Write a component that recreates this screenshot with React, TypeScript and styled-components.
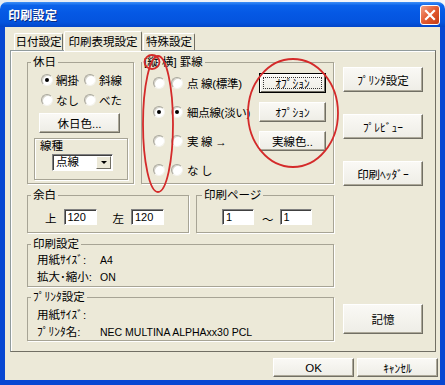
import React from "react";
import styled, { createGlobalStyle } from "styled-components";

const FONT = `"Liberation Sans", "Noto Sans CJK JP", "Noto Sans", sans-serif`;

const Global = createGlobalStyle`
  html, body { margin: 0; padding: 0; background: #eef1f6; }
  body { font-family: ${FONT}; font-size: 11.5px; color: #000; }
  * { box-sizing: border-box; }
`;

const Screen = styled.div`
  position: relative;
  width: 445px;
  height: 385px;
  overflow: hidden;
  padding-top: 2px;
  background: linear-gradient(90deg, #e6ebf2, #f6f7fa);
`;

const Window = styled.div`
  display: flex;
  flex-direction: column;
  width: 445px;
  height: 383px;
`;

const TitleBar = styled.div`
  height: 25px;
  flex: none;
  display: flex;
  align-items: center;
  justify-content: space-between;
  padding: 0 5px 0 8px;
  border-radius: 7px 7px 0 0;
  background: linear-gradient(#3d8ff6 0%, #0a62ea 14%, #0558e4 45%, #0454de 80%, #0346c9 100%);
`;

const Title = styled.span`
  color: #fff;
  font-weight: bold;
  font-size: 12px;
  letter-spacing: 0.3px;
  text-shadow: 1px 1px 0 #0a2a80;
`;

const CloseButton = styled.div`
  width: 20px;
  height: 20px;
  border: 1px solid #fff;
  border-radius: 3px;
  background: linear-gradient(135deg, #f3a084, #e35a2f 50%, #c53b14);
  display: flex;
  align-items: center;
  justify-content: center;
`;

const Body = styled.div`
  flex: 1;
  display: flex;
  flex-direction: column;
  background: #ece9d8;
  border: solid #0747d2;
  border-width: 0 5px 5px 5px;
  padding: 4px 4px 3px 5px;
`;

const TabRow = styled.div`
  display: flex;
  align-items: flex-end;
  height: 19px;
  padding-left: 4px;
  gap: 1px;
  position: relative;
  z-index: 1;
`;

const Tab = styled.div<{ $active?: boolean; $w: number }>`
  width: ${(p) => p.$w}px;
  height: ${(p) => (p.$active ? 20 : 17)}px;
  margin-bottom: ${(p) => (p.$active ? -1 : 0)}px;
  display: flex;
  align-items: center;
  justify-content: center;
  background: #ece9d8;
  border-top: 1px solid #fff;
  border-left: 1px solid #fff;
  border-right: 1px solid #716f64;
  border-radius: 2px 2px 0 0;
  white-space: nowrap;
  line-height: 14px;
`;

const Panel = styled.div`
  height: 302px;
  border: 1px solid #919b9c;
  border-right-color: #716f64;
  border-bottom-color: #716f64;
  box-shadow: inset 1px 1px 0 #fff;
  background: #ece9d8;
  padding: 5px 0 0 16px;
  display: grid;
  grid-template-columns: 307px 80px;
  column-gap: 9px;
  align-items: start;
`;

const LeftColumn = styled.div`
  display: flex;
  flex-direction: column;
`;

const Row = styled.div<{ $mt?: number }>`
  display: flex;
  gap: 7px;
  margin-top: ${(p) => p.$mt ?? 0}px;
`;

const Group = styled.fieldset<{ $w: number; $h: number; $mt?: number }>`
  margin: ${(p) => p.$mt ?? 0}px 0 0 0;
  padding: 0;
  min-width: 0;
  width: ${(p) => p.$w}px;
  height: ${(p) => p.$h}px;
  border: 1px solid #a7a495;
  box-shadow: 1px 1px 0 #fff;
`;

const Legend = styled.legend<{ $x?: number }>`
  padding: 0 2px;
  margin-left: ${(p) => p.$x ?? 3}px;
  line-height: 12px;
  height: 12px;
  white-space: nowrap;
`;

const RadioCircle = styled.span<{ $on?: boolean }>`
  width: 12px;
  height: 12px;
  flex: none;
  border-radius: 50%;
  background: #fff;
  border: 1px solid;
  border-color: #a9a79c #f4f3ee #f4f3ee #a9a79c;
  box-shadow: inset 1px 1px 0 #d6d4ca;
  display: flex;
  align-items: center;
  justify-content: center;
  &::after {
    content: "";
    width: 4px;
    height: 4px;
    border-radius: 50%;
    background: ${(p) => (p.$on ? "#000" : "transparent")};
  }
`;

const Option = styled.label`
  display: flex;
  align-items: center;
  gap: 3px;
  height: 16px;
  white-space: nowrap;
`;

const Btn = styled.div<{ $w: number; $h: number; $focus?: boolean }>`
  position: relative;
  flex: none;
  width: ${(p) => p.$w}px;
  height: ${(p) => p.$h}px;
  display: flex;
  align-items: center;
  justify-content: center;
  white-space: nowrap;
  background: linear-gradient(#faf9f5, #eeede6);
  border: 1px solid;
  border-color: ${(p) => (p.$focus ? "#000" : "#fff #716f64 #716f64 #fff")};
  box-shadow: ${(p) =>
    p.$focus ? "inset 1px 1px 0 #fff, inset -1px -1px 0 #716f64" : "inset -1px -1px 0 #aca899"};
  &::before {
    content: "";
    display: ${(p) => (p.$focus ? "block" : "none")};
    position: absolute;
    inset: 3px;
    border: 1px dotted #333;
  }
`;

const HolidayBody = styled.div`
  display: flex;
  flex-direction: column;
  align-items: flex-start;
  padding: 4px 0 0 6px;
`;

const RadioGrid = styled.div`
  display: grid;
  grid-template-columns: 43px 43px;
  row-gap: 4px;
  margin-left: 7px;
`;

const HolidayColorButton = styled(Btn)`
  margin: 5px 0 0 5px;
`;

const LineBox = styled.div`
  margin-top: 5px;
  width: 94px;
  height: 42px;
  border: 1px solid #a7a495;
  box-shadow: 1px 1px 0 #fff, inset 1px 1px 0 #fff;
  padding: 1px 0 0 5px;
  display: flex;
  flex-direction: column;
  align-items: flex-start;
`;

const LineLabel = styled.span`
  line-height: 13px;
`;

const Select = styled.div`
  margin: 1px 0 0 12px;
  width: 61px;
  height: 17px;
  display: flex;
  background: #fff;
  border: 1px solid;
  border-color: #808080 #fff #fff #808080;
  box-shadow: inset 1px 1px 0 #404040;
  padding: 1px 1px 1px 3px;
`;

const SelectText = styled.span`
  flex: 1;
  line-height: 13px;
`;

const SelectArrow = styled.div`
  width: 15px;
  height: 100%;
  background: #ece9d8;
  border: 1px solid;
  border-color: #fff #716f64 #716f64 #fff;
  display: flex;
  align-items: center;
  justify-content: center;
  &::after {
    content: "";
    border-left: 3px solid transparent;
    border-right: 3px solid transparent;
    border-top: 3px solid #000;
  }
`;

const RuledGrid = styled.div`
  display: grid;
  grid-template-columns: 18px 16px 1fr 67px;
  grid-auto-rows: 20px;
  row-gap: 9px;
  align-items: center;
  padding: 5px 7px 0 11px;
`;

const RuledLabel = styled.span`
  white-space: nowrap;
  letter-spacing: -0.3px;
`;

const RightColumn = styled.div`
  display: flex;
  flex-direction: column;
  gap: 22px;
  padding-top: 11px;
`;

const MemoryButton = styled(Btn)`
  margin-top: 96px;
`;

const FieldRow = styled.div<{ $pl: number }>`
  display: flex;
  align-items: center;
  padding: 6px 0 0 ${(p) => p.$pl}px;
`;

const FieldLabel = styled.span<{ $ml?: number }>`
  margin: 3px 7px 0 ${(p) => p.$ml ?? 0}px;
`;

const TextBox = styled.div<{ $w: number }>`
  width: ${(p) => p.$w}px;
  height: 16px;
  background: #fff;
  border: 1px solid;
  border-color: #808080 #fff #fff #808080;
  box-shadow: inset 1px 1px 0 #404040;
  padding-left: 3px;
  font-size: 11px;
  line-height: 14px;
`;

const Tilde = styled.span`
  margin: 4px 6px 0 8px;
`;

const InfoGrid = styled.div<{ $pt: number; $gap: number }>`
  display: grid;
  grid-template-columns: 63px auto;
  row-gap: ${(p) => p.$gap}px;
  padding: ${(p) => p.$pt}px 0 0 9px;
  line-height: 16px;
  white-space: nowrap;
`;

const Value = styled.span`
  font-size: 10.5px;
`;

const Footer = styled.div`
  display: flex;
  justify-content: flex-end;
  gap: 3px;
  margin: 6px -2px 0 0;
`;

const Annotations = styled.svg`
  position: absolute;
  left: 0;
  top: 0;
  pointer-events: none;
`;

const Radio = ({ on }: { on?: boolean }) => <RadioCircle $on={on} />;

const ruledOptions = [
  { label: "点 線(標準)", on: false, btn: "ｵﾌﾟｼｮﾝ", focus: true },
  { label: "細点線(淡い)", on: true, btn: "ｵﾌﾟｼｮﾝ" },
  { label: "実 線 →", on: false, btn: "実線色.." },
  { label: "な し", on: false },
];

export default function App() {
  return (
    <>
      <Global />
      <Screen>
        <Window>
          <TitleBar>
            <Title>印刷設定</Title>
            <CloseButton>
              <svg width="12" height="12" viewBox="0 0 12 12">
                <path d="M2 2 L10 10 M10 2 L2 10" stroke="#fff" strokeWidth="2.2" strokeLinecap="square" />
              </svg>
            </CloseButton>
          </TitleBar>
          <Body>
            <TabRow>
              <Tab $w={49}>日付設定</Tab>
              <Tab $w={78} $active>印刷表現設定</Tab>
              <Tab $w={52}>特殊設定</Tab>
            </TabRow>
            <Panel>
              <LeftColumn>
                <Row>
                  <Group $w={107} $h={128}>
                    <Legend>休日</Legend>
                    <HolidayBody>
                      <RadioGrid>
                        <Option><Radio on />網掛</Option>
                        <Option><Radio />斜線</Option>
                        <Option><Radio />なし</Option>
                        <Option><Radio />べた</Option>
                      </RadioGrid>
                      <HolidayColorButton $w={81} $h={20}>休日色...</HolidayColorButton>
                      <LineBox>
                        <LineLabel>線種</LineLabel>
                        <Select>
                          <SelectText>点線</SelectText>
                          <SelectArrow />
                        </Select>
                      </LineBox>
                    </HolidayBody>
                  </Group>
                  <Group $w={193} $h={128}>
                    <Legend $x={0}>[縦 横] 罫線</Legend>
                    <RuledGrid>
                      {ruledOptions.map((o) => (
                        <React.Fragment key={o.label}>
                          <Radio on={o.on} />
                          <Radio on={o.on} />
                          <RuledLabel>{o.label}</RuledLabel>
                          {o.btn ? (
                            <Btn $w={67} $h={20} $focus={o.focus}>{o.btn}</Btn>
                          ) : (
                            <span />
                          )}
                        </React.Fragment>
                      ))}
                    </RuledGrid>
                  </Group>
                </Row>
                <Row $mt={5}>
                  <Group $w={162} $h={44}>
                    <Legend>余白</Legend>
                    <FieldRow $pl={17}>
                      <FieldLabel>上</FieldLabel>
                      <TextBox $w={33}>120</TextBox>
                      <FieldLabel $ml={16}>左</FieldLabel>
                      <TextBox $w={33}>120</TextBox>
                    </FieldRow>
                  </Group>
                  <Group $w={138} $h={44}>
                    <Legend $x={5}>印刷ページ</Legend>
                    <FieldRow $pl={25}>
                      <TextBox $w={32}>1</TextBox>
                      <Tilde>～</Tilde>
                      <TextBox $w={32}>1</TextBox>
                    </FieldRow>
                  </Group>
                </Row>
                <Group $w={307} $h={49} $mt={5}>
                  <Legend>印刷設定</Legend>
                  <InfoGrid $pt={2} $gap={1}>
                    <span>用紙ｻｲｽﾞ:</span>
                    <Value>A4</Value>
                    <span>拡大･縮小:</span>
                    <Value>ON</Value>
                  </InfoGrid>
                </Group>
                <Group $w={307} $h={50} $mt={4}>
                  <Legend>ﾌﾟﾘﾝﾀ設定</Legend>
                  <InfoGrid $pt={4} $gap={1}>
                    <span>用紙ｻｲｽﾞ:</span>
                    <span></span>
                    <span>ﾌﾟﾘﾝﾀ名:</span>
                    <Value>NEC MULTINA ALPHAxx30 PCL</Value>
                  </InfoGrid>
                </Group>
              </LeftColumn>
              <RightColumn>
                <Btn $w={80} $h={25}>ﾌﾟﾘﾝﾀ設定</Btn>
                <Btn $w={80} $h={25}>ﾌﾟﾚﾋﾞｭｰ</Btn>
                <Btn $w={80} $h={25}>印刷ﾍｯﾀﾞｰ</Btn>
                <MemoryButton $w={80} $h={30}>記憶</MemoryButton>
              </RightColumn>
            </Panel>
            <Footer>
              <Btn $w={81} $h={19}>OK</Btn>
              <Btn $w={81} $h={19}>ｷｬﾝｾﾙ</Btn>
            </Footer>
          </Body>
        </Window>
        <Annotations width="445" height="385" viewBox="0 0 445 385">
          <g fill="none" stroke="#d42a2a" strokeWidth="1.8">
            <ellipse cx="152" cy="62" rx="7.5" ry="7" />
            <ellipse cx="158" cy="124" rx="15" ry="68" />
            <ellipse cx="293" cy="113" rx="45" ry="54" />
          </g>
        </Annotations>
      </Screen>
    </>
  );
}
